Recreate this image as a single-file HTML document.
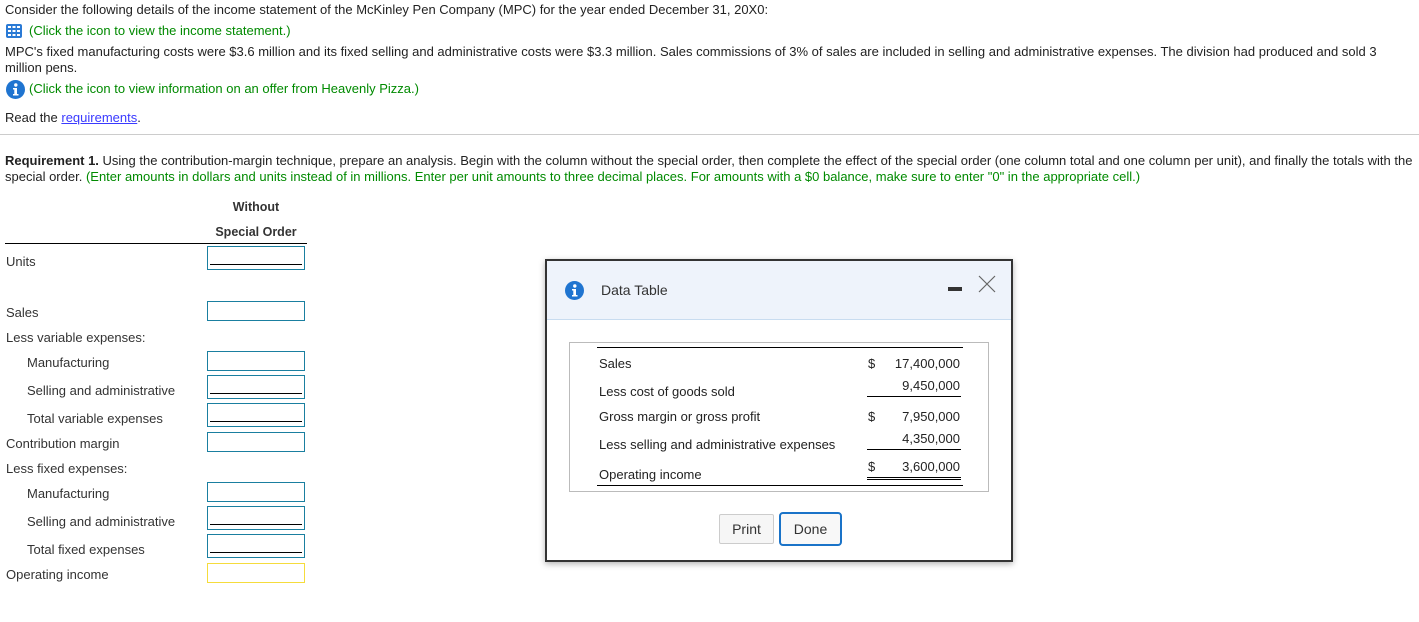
<!DOCTYPE html>
<html><head><meta charset="utf-8"><style>
*{margin:0;padding:0;box-sizing:border-box}
body{width:1419px;height:622px;background:#fff;font-family:"Liberation Sans",Arial,sans-serif;font-size:13px;color:#222;position:relative;overflow:hidden}
.a{position:absolute;white-space:nowrap;line-height:16px}
.g{color:#008a00}
.box{position:absolute;left:207px;width:98px;height:20px;border:1px solid #1a7fa0}
.box.u{height:24px}
.box.u::after{content:"";position:absolute;left:2px;right:2px;bottom:4px;border-top:1px solid #000}
.lbl{position:absolute;line-height:16px;color:#333}
</style></head><body>
<div class="a" style="left:5px;top:2px">Consider the following details of the income statement of the McKinley Pen Company (MPC) for the year ended December 31, 20X0:</div>
<svg style="position:absolute;left:6px;top:24px" width="16" height="14" viewBox="0 0 16 14"><rect x="0" y="0" width="16" height="14" rx="2" fill="#2a7ad5"/><g fill="#fff"><rect x="2" y="2" width="3" height="2"/><rect x="6.5" y="2" width="3" height="2"/><rect x="11" y="2" width="3" height="2"/><rect x="2" y="6" width="3" height="2"/><rect x="6.5" y="6" width="3" height="2"/><rect x="11" y="6" width="3" height="2"/><rect x="2" y="10" width="3" height="2"/><rect x="6.5" y="10" width="3" height="2"/><rect x="11" y="10" width="3" height="2"/></g></svg>
<div class="a g" style="left:29px;top:23px">(Click the icon to view the income statement.)</div>
<div class="a" style="left:5px;top:44px">MPC's fixed manufacturing costs were $3.6 million and its fixed selling and administrative costs were $3.3 million. Sales commissions of 3% of sales are included in selling and administrative expenses. The division had produced and sold 3</div>
<div class="a" style="left:5px;top:60px">million pens.</div>
<svg style="position:absolute;left:6px;top:80px" width="19" height="19" viewBox="0 0 19 19"><circle cx="9.5" cy="9.5" r="9.5" fill="#1f74d0"/><circle cx="9.8" cy="5" r="1.7" fill="#fff"/><path d="M7 8h4v6h1.5v1.5h-5.5V14h1.3V9.5H7z" fill="#fff"/></svg>
<div class="a g" style="left:29px;top:81px">(Click the icon to view information on an offer from Heavenly Pizza.)</div>
<div class="a" style="left:5px;top:110px">Read the <span style="color:#3a3aff;text-decoration:underline">requirements</span>.</div>
<div style="position:absolute;left:0;top:134px;width:1419px;border-top:1px solid #ccc"></div>
<div class="a" style="left:5px;top:153px"><b>Requirement 1.</b> Using the contribution-margin technique, prepare an analysis. Begin with the column without the special order, then complete the effect of the special order (one column total and one column per unit), and finally the totals with the</div>
<div class="a" style="left:5px;top:169px">special order. <span class="g">(Enter amounts in dollars and units instead of in millions. Enter per unit amounts to three decimal places. For amounts with a $0 balance, make sure to enter "0" in the appropriate cell.)</span></div>
<div class="a" style="left:207px;top:199px;width:98px;text-align:center;font-weight:bold;color:#333;font-size:12.5px">Without</div>
<div class="a" style="left:207px;top:224px;width:98px;text-align:center;font-weight:bold;color:#333;font-size:12.5px">Special Order</div>
<div style="position:absolute;left:5px;top:243px;width:302px;border-top:1px solid #000"></div>
<div class="lbl" style="left:6px;top:254px">Units</div>
<div class="lbl" style="left:6px;top:305px">Sales</div>
<div class="lbl" style="left:6px;top:330px">Less variable expenses:</div>
<div class="lbl" style="left:27px;top:355px">Manufacturing</div>
<div class="lbl" style="left:27px;top:383px">Selling and administrative</div>
<div class="lbl" style="left:27px;top:411px">Total variable expenses</div>
<div class="lbl" style="left:6px;top:436px">Contribution margin</div>
<div class="lbl" style="left:6px;top:461px">Less fixed expenses:</div>
<div class="lbl" style="left:27px;top:486px">Manufacturing</div>
<div class="lbl" style="left:27px;top:514px">Selling and administrative</div>
<div class="lbl" style="left:27px;top:542px">Total fixed expenses</div>
<div class="lbl" style="left:6px;top:567px">Operating income</div>
<div class="box u" style="top:246px"></div>
<div class="box" style="top:301px"></div>
<div class="box" style="top:351px"></div>
<div class="box u" style="top:375px"></div>
<div class="box u" style="top:403px"></div>
<div class="box" style="top:432px"></div>
<div class="box" style="top:482px"></div>
<div class="box u" style="top:506px"></div>
<div class="box u" style="top:534px"></div>
<div class="box" style="top:563px;border-color:#f5dc3c"></div>

<div style="position:absolute;left:545px;top:259px;width:468px;height:303px;border:2px solid #333;background:#fff;box-shadow:0 2px 6px rgba(0,0,0,.3)">
<div style="position:absolute;left:0;top:0;right:0;height:59px;background:#eef3fb;border-bottom:1px solid #c8dcf0"></div>
<svg style="position:absolute;left:18px;top:20px" width="19" height="19" viewBox="0 0 19 19"><circle cx="9.5" cy="9.5" r="9.5" fill="#1f74d0"/><circle cx="9.8" cy="5" r="1.7" fill="#fff"/><path d="M7 8h4v6h1.5v1.5h-5.5V14h1.3V9.5H7z" fill="#fff"/></svg>
<div class="a" style="left:54px;top:21px;font-size:14px;color:#333">Data Table</div>
<div style="position:absolute;left:401px;top:26px;width:14px;height:4px;background:#333"></div>
<svg style="position:absolute;left:431px;top:14px" width="18" height="18"><path d="M1 1L17 17M17 1L1 17" stroke="#666" stroke-width="1.2"/></svg>
<div style="position:absolute;left:22px;top:81px;width:420px;height:150px;border:1px solid #bbb"></div>
<div style="position:absolute;left:50px;top:86px;width:366px;border-top:1px solid #000"></div>
<div style="position:absolute;left:50px;top:224px;width:366px;border-top:1px solid #000"></div>
<div class="a" style="left:52px;top:95px">Sales</div>
<div class="a" style="left:52px;top:123px">Less cost of goods sold</div>
<div class="a" style="left:52px;top:148px">Gross margin or gross profit</div>
<div class="a" style="left:52px;top:176px">Less selling and administrative expenses</div>
<div class="a" style="left:52px;top:206px">Operating income</div>
<div class="a" style="left:321px;top:95px">$</div><div class="a" style="left:330px;top:95px;width:83px;text-align:right">17,400,000</div>
<div class="a" style="left:330px;top:117px;width:83px;text-align:right">9,450,000</div>
<div style="position:absolute;left:320px;top:135px;width:94px;border-top:1px solid #000"></div>
<div class="a" style="left:321px;top:148px">$</div><div class="a" style="left:330px;top:148px;width:83px;text-align:right">7,950,000</div>
<div class="a" style="left:330px;top:170px;width:83px;text-align:right">4,350,000</div>
<div style="position:absolute;left:320px;top:188px;width:94px;border-top:1px solid #000"></div>
<div class="a" style="left:321px;top:198px">$</div><div class="a" style="left:330px;top:198px;width:83px;text-align:right">3,600,000</div>
<div style="position:absolute;left:320px;top:216px;width:94px;height:3px;border-top:1px solid #000;border-bottom:1px solid #000"></div>
<div style="position:absolute;left:172px;top:253px;width:55px;height:30px;border:1px solid #ccc;border-radius:2px;background:#f6f6f6;text-align:center;line-height:28px;font-size:14px;color:#333">Print</div>
<div style="position:absolute;left:232px;top:251px;width:63px;height:34px;border:2px solid #1a73c8;border-radius:4px;background:#f8f8f8;text-align:center;line-height:30px;font-size:14px;color:#333">Done</div>
</div>
</body></html>
